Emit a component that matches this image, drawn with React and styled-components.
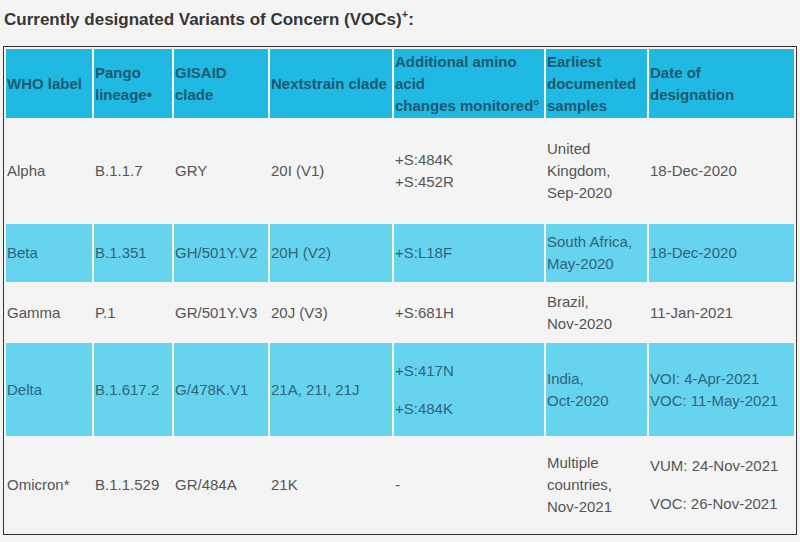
import styled, { createGlobalStyle } from "styled-components";

const GlobalStyle = createGlobalStyle`
  html, body {
    margin: 0;
    padding: 0;
    background: #f4f4f4;
  }
  body {
    font-family: "Liberation Sans", Arial, sans-serif;
  }
`;

const Page = styled.div`
  padding: 10px 3px 0 3px;
  width: 800px;
  box-sizing: border-box;
`;

const Title = styled.h3`
  margin: 0 0 16px 1px;
  font-size: 17px;
  line-height: 20px;
  font-weight: 700;
  color: #363636;
  sup {
    font-size: 11px;
    line-height: 0;
    vertical-align: 7px;
  }
`;

const Table = styled.table`
  width: 794px;
  table-layout: fixed;
  border: 1px solid #333;
  border-spacing: 2px;
  border-collapse: separate;
  font-size: 15px;
  line-height: 22px;
`;

const HeadRow = styled.tr`
  height: 69px;
`;

const Th = styled.th`
  background: #1fb9e3;
  color: #1c5a70;
  font-weight: 700;
  text-align: left;
  vertical-align: middle;
  padding: 0 1px;
`;

const Row = styled.tr`
  height: ${(p) => p.$h}px;
`;

const Td = styled.td`
  background: ${(p) => (p.$hl ? "#66d3ef" : "#f4f4f4")};
  color: ${(p) => (p.$hl ? "#2f6578" : "#555")};
  vertical-align: middle;
  padding: 0 1px;
`;

const Gap = styled.div`
  height: 16px;
`;

const widths = [86, 78, 94, 122, 150, 101, 145];

const rows = [
  {
    h: 102,
    cells: ["Alpha", "B.1.1.7", "GRY", "20I (V1)", ["+S:484K", "+S:452R"], ["United", "Kingdom,", "Sep-2020"], ["18-Dec-2020"]],
  },
  {
    h: 58,
    hl: true,
    cells: ["Beta", "B.1.351", "GH/501Y.V2", "20H (V2)", ["+S:L18F"], ["South Africa,", "May-2020"], ["18-Dec-2020"]],
  },
  {
    h: 57,
    cells: ["Gamma", "P.1", "GR/501Y.V3", "20J (V3)", ["+S:681H"], ["Brazil,", "Nov-2020"], ["11-Jan-2021"]],
  },
  {
    h: 93,
    hl: true,
    cells: ["Delta", "B.1.617.2", "G/478K.V1", "21A, 21I, 21J", ["+S:417N", null, "+S:484K"], ["India,", "Oct-2020"], ["VOI: 4-Apr-2021", "VOC: 11-May-2021"]],
  },
  {
    h: 94,
    cells: ["Omicron*", "B.1.1.529", "GR/484A", "21K", ["-"], ["Multiple", "countries,", "Nov-2021"], ["VUM: 24-Nov-2021", null, "VOC: 26-Nov-2021"]],
  },
];

const renderCell = (c) => {
  if (!Array.isArray(c)) return c;
  return c.map((line, i) =>
    line === null ? <Gap key={i} /> : <div key={i}>{line}</div>
  );
};

const App = () => {
  return (
    <Page>
      <GlobalStyle />
      <Title>
        Currently designated Variants of Concern (VOCs)<sup>+</sup>:
      </Title>
      <Table>
        <colgroup>
          {widths.map((w, i) => (
            <col key={i} style={{ width: w }} />
          ))}
        </colgroup>
        <thead>
          <HeadRow>
            <Th>WHO label</Th>
            <Th>Pango lineage•</Th>
            <Th>GISAID clade</Th>
            <Th>Nextstrain clade</Th>
            <Th>
              Additional amino acid
              <br />
              changes monitored°
            </Th>
            <Th>Earliest documented samples</Th>
            <Th>
              Date of
              <br />
              designation
            </Th>
          </HeadRow>
        </thead>
        <tbody>
          {rows.map((r, i) => (
            <Row key={i} $h={r.h}>
              {r.cells.map((c, j) => (
                <Td key={j} $hl={r.hl}>
                  {renderCell(c)}
                </Td>
              ))}
            </Row>
          ))}
        </tbody>
      </Table>
    </Page>
  );
};

export default App;
